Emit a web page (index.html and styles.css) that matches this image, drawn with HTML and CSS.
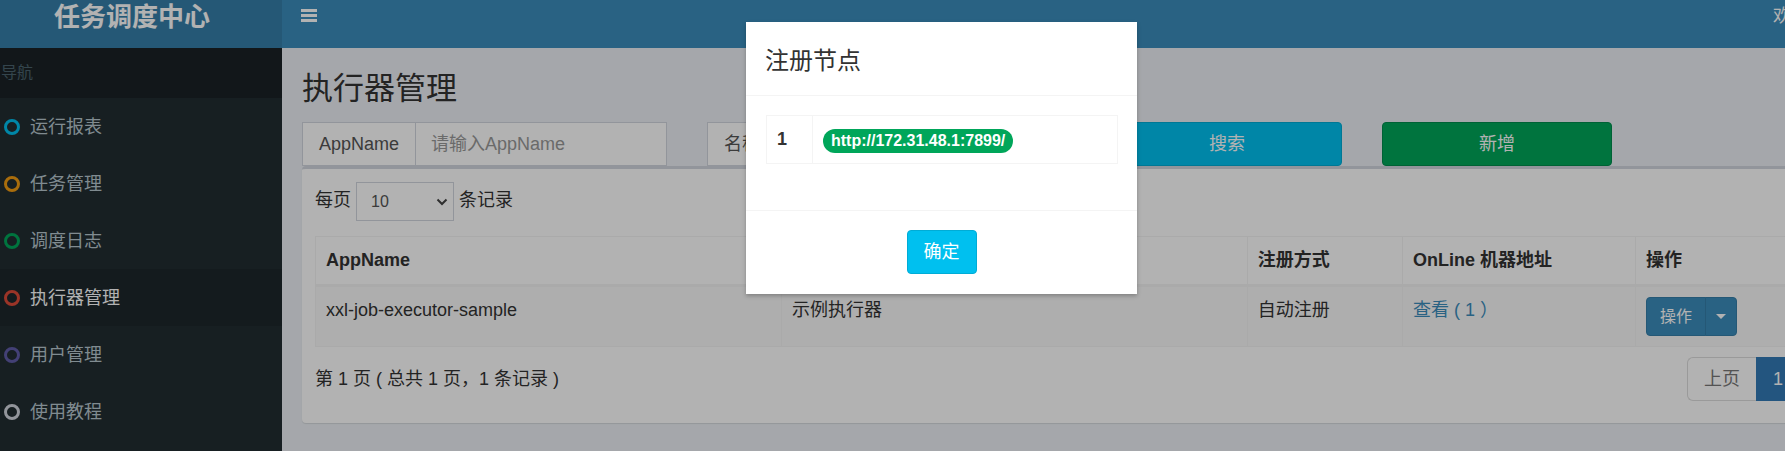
FILE: index.html
```html
<!DOCTYPE html>
<html lang="zh-CN">
<head>
<meta charset="utf-8">
<title>任务调度中心</title>
<link rel="stylesheet" href="styles.css">
</head>
<body>
<div class="viewport">
<div class="app">
  <aside class="sidebar">
    <a class="logo" href="#">任务调度中心</a>
    <nav>
      <div class="nav-header">导航</div>
      <a class="nav-item" href="#"><svg class="ring aqua" viewBox="0 0 16 16"><circle cx="8" cy="8" r="6.5"/></svg>运行报表</a>
      <a class="nav-item" href="#"><svg class="ring yellow" viewBox="0 0 16 16"><circle cx="8" cy="8" r="6.5"/></svg>任务管理</a>
      <a class="nav-item" href="#"><svg class="ring green" viewBox="0 0 16 16"><circle cx="8" cy="8" r="6.5"/></svg>调度日志</a>
      <a class="nav-item active" href="#"><svg class="ring red" viewBox="0 0 16 16"><circle cx="8" cy="8" r="6.5"/></svg>执行器管理</a>
      <a class="nav-item" href="#"><svg class="ring purple" viewBox="0 0 16 16"><circle cx="8" cy="8" r="6.5"/></svg>用户管理</a>
      <a class="nav-item" href="#"><svg class="ring white" viewBox="0 0 16 16"><circle cx="8" cy="8" r="6.5"/></svg>使用教程</a>
    </nav>
  </aside>
  <div class="main">
    <header class="topbar">
      <button class="toggle" type="button" aria-label="切换导航"><svg viewBox="0 0 16 13"><path d="M0.500 1.500h15M0.500 6.500h15M0.500 11.500h15"/></svg></button>
      <a class="user" href="#">欢迎</a>
    </header>
    <main>
      <h1>执行器管理</h1>
      <form class="filters">
        <div class="field"><label for="appname">AppName</label><input id="appname" type="text" placeholder="请输入AppName"></div>
        <div class="field"><label for="title">名称</label><input id="title" type="text" placeholder="请输入名称"></div>
        <button class="btn info" type="button">搜索</button>
        <button class="btn success" type="button">新增</button>
      </form>
      <section class="box">
        <div class="length">
          <label for="size">每页</label>
          <span class="select"><select id="size"><option>10</option><option>20</option><option>50</option></select><svg viewBox="0 0 12 8"><path d="M1.500 1.500 6 6l4.500-4.500"/></svg></span>
          <span>条记录</span>
        </div>
        <table class="grid">
          <colgroup><col class="wide"><col class="wide"><col class="narrow"><col class="mid"><col class="mid"></colgroup>
          <thead><tr><th>AppName</th><th>名称</th><th>注册方式</th><th>OnLine 机器地址</th><th>操作</th></tr></thead>
          <tbody><tr>
            <td>xxl-job-executor-sample</td><td>示例执行器</td><td>自动注册</td>
            <td><a href="#">查看 ( 1 ）</a></td>
            <td><div class="btn-group"><button type="button">操作</button><button class="drop" type="button" aria-label="更多操作"><i class="caret"></i></button></div></td>
          </tr></tbody>
        </table>
        <div class="box-foot">
          <span>第 1 页 ( 总共 1 页，1 条记录 )</span>
          <nav class="pages"><a href="#">上页</a><a class="current" href="#">1</a><a href="#">下页</a></nav>
        </div>
      </section>
    </main>
  </div>
</div>
<div class="overlay">
  <div class="dialog" role="dialog" aria-labelledby="dialog-title">
    <h2 id="dialog-title">注册节点</h2>
    <div class="dialog-body">
      <table class="nodes"><tbody><tr><th>1</th><td><span class="badge">http://172.31.48.1:7899/</span></td></tr></tbody></table>
    </div>
    <div class="dialog-foot"><button class="btn info" type="button">确定</button></div>
  </div>
</div>
</div>
</body>
</html>
```
FILE: styles.css
```css
* { box-sizing: border-box; }
body {
  margin: 0;
  font: 18px/26px "Liberation Sans", "Noto Sans CJK SC", sans-serif;
  color: #333;
}
a { text-decoration: none; color: #3c8dbc; }
button, input, select { font: inherit; }
.viewport { position: relative; min-height: 100vh; overflow: hidden; }
.app { display: flex; width: calc(100% + 117px); min-height: 100vh; }

.sidebar { flex: none; width: 282px; background: #222d32; }
.logo {
  display: block;
  height: 48px;
  padding-right: 18px;
  background: #367fa9;
  color: #fff;
  font-size: 26px;
  font-weight: bold;
  line-height: 34px;
  text-align: center;
}
.nav-header {
  height: 50px;
  padding: 12px 1px;
  background: #1a2226;
  color: #4b646f;
  font-size: 16px;
}
.nav-item {
  display: flex;
  align-items: center;
  gap: 10px;
  height: 57px;
  padding-left: 4px;
  color: #b8c7ce;
}
.nav-item.active { background: #1e282c; color: #fff; }
.ring { width: 16px; height: 16px; fill: none; stroke-width: 3; }
.aqua { stroke: #00c0ef; }
.yellow { stroke: #f39c12; }
.green { stroke: #00a65a; }
.red { stroke: #dd4b39; }
.purple { stroke: #605ca8; }
.white { stroke: #d2d6de; }

.main { flex: 1; min-width: 0; background: #ecf0f5; }
.topbar {
  display: flex;
  justify-content: space-between;
  align-items: flex-start;
  height: 48px;
  padding: 3px 93px 0 19px;
  background: #3c8dbc;
}
.toggle { display: flex; padding: 6px 0; border: 0; background: none; }
.toggle svg { width: 16px; height: 13px; stroke: #fff; stroke-width: 3; stroke-linecap: round; }
.user { color: #fff; }
main { padding: 21px 20px 28px; }
h1 { margin: 0 0 13px; font-size: 31px; font-weight: normal; line-height: 40px; }

.filters {
  display: grid;
  grid-template-columns: repeat(2, minmax(0, 365fr)) repeat(3, minmax(0, 230fr));
  gap: 40px;
}
.field { display: flex; height: 44px; background: #fff; border: 1px solid #d2d6de; color: #555; }
.field label { padding: 8px 16px; border-right: 1px solid #d2d6de; white-space: nowrap; }
.field input { flex: 1; min-width: 0; padding: 0 15px; border: 0; background: none; }
.field input::placeholder { color: #999; }
.btn { height: 44px; padding: 0 16px; border: 1px solid; border-radius: 4px; color: #fff; }
.info { background: #00c0ef; border-color: #00acd6; }
.success { background: #00a65a; border-color: #008d4c; }

.box {
  padding: 13px 13px 22px;
  background: #fff;
  border-top: 3px solid #d2d6de;
  border-radius: 4px;
  box-shadow: 0 1px 1px rgba(0, 0, 0, .1);
}
.length { display: flex; gap: 5px; margin-bottom: 15px; line-height: 36px; }
.select { display: grid; width: 98px; height: 39px; }
.select select, .select svg { grid-area: 1 / 1; }
.select select {
  appearance: none;
  padding: 0 14px;
  border: 1px solid #d2d6de;
  background: #fff;
  color: #555;
  font-size: 16px;
}
.select svg {
  justify-self: end;
  align-self: center;
  width: 12px;
  height: 8px;
  margin-right: 6px;
  fill: none;
  stroke: #444;
  stroke-width: 2;
  pointer-events: none;
}
table { width: 100%; border-collapse: collapse; }
th, td { padding: 10px; border: 1px solid #f4f4f4; text-align: left; vertical-align: top; }
.grid { table-layout: fixed; }
.grid th { padding: 11px 10px; border-bottom-width: 3px; line-height: 25px; }
.grid td { background: #f9f9f9; }
.wide { width: 30%; }
.mid { width: 15%; }
.narrow { width: 10%; }
.btn-group { display: flex; }
.btn-group button {
  height: 39px;
  padding: 0 13px;
  border: 1px solid #367fa9;
  border-radius: 4px 0 0 4px;
  background: #3c8dbc;
  color: #fff;
  font-size: 16px;
}
.btn-group .drop { width: 32px; margin-left: -1px; padding: 0 10px; border-radius: 0 4px 4px 0; }
.caret { display: block; border: 5px solid transparent; border-top-color: #fff; border-bottom: 0; }
.box-foot { display: flex; justify-content: space-between; padding-top: 10px; line-height: 44px; }
.pages { display: flex; line-height: 42px; }
.pages a { padding: 0 16px; border: 1px solid #ddd; background: #fff; color: #777; }
.pages a:first-child { border-right: 0; border-radius: 6px 0 0 6px; }
.pages a:last-child { border-left: 0; border-radius: 0 6px 6px 0; }
.pages .current { background: #337ab7; border-color: #337ab7; color: #fff; }

.overlay {
  position: absolute;
  inset: 0 -98px 0 0;
  padding-top: 22px;
  background: rgba(0, 0, 0, .3);
}
.dialog {
  width: 391px;
  margin: 0 auto;
  background: #fff;
  box-shadow: 0 2px 4px rgba(0, 0, 0, .25);
}
h2 {
  margin: 0;
  padding: 22px 19px 18px;
  border-bottom: 1px solid #f4f4f4;
  font-size: 24px;
  font-weight: normal;
  line-height: 33px;
}
.dialog-body { padding: 19px 19px 46px 20px; }
.nodes th { width: 46px; }
.nodes td { padding: 13px 10px 10px; }
.badge {
  display: block;
  width: max-content;
  padding: 0 8px;
  border-radius: 12px;
  background: #00a65a;
  color: #fff;
  font-size: 16px;
  font-weight: bold;
  line-height: 24px;
}
.dialog-foot { padding: 19px 20px 20px; border-top: 1px solid #f4f4f4; text-align: center; }
.dialog-foot .btn { display: block; margin: 0 auto; }
```
